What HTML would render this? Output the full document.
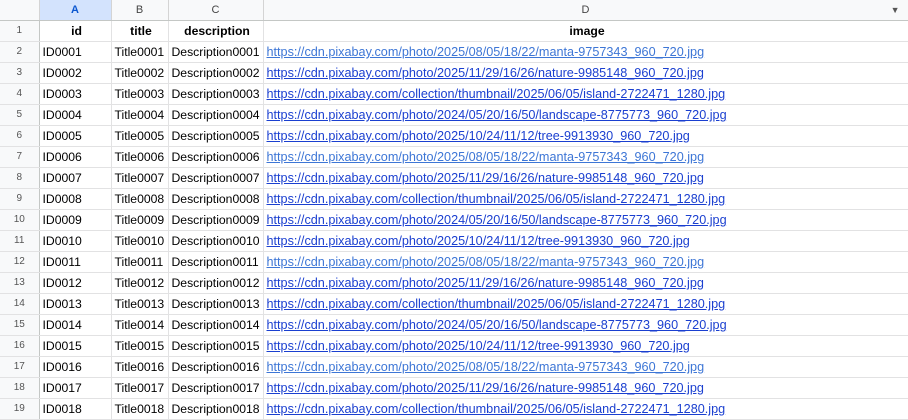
<!DOCTYPE html>
<html><head><meta charset="utf-8"><style>
body{margin:0;width:908px;height:419px;overflow:hidden;background:#fff;font-family:"Liberation Sans",Arial,sans-serif;}
table{border-collapse:collapse;table-layout:fixed;position:absolute;left:0;top:0;width:908px;}
td{height:20px;padding:0 0 0 3px;border-right:1px solid #e2e2e3;border-bottom:1px solid #e2e2e3;font-size:12.2px;white-space:nowrap;overflow:hidden;color:#000;line-height:20px;}
tr.h td{background:#f8f9fa;color:#444;font-size:11px;text-align:center;padding:0;border-bottom:1px solid #c4c7c5;border-right:1px solid #d4d4d4;}
tr.h td.sel{background:#d3e3fd;color:#0b57d0;font-weight:bold;}
td.rn{background:#f8f9fa;color:#555;font-size:10px;text-align:center;padding:0;border-right:1px solid #c4c7c5;}
tr.b td:not(.rn){font-weight:bold;text-align:center;}
a{color:#1a3fd0;text-decoration:underline;font-size:12.65px;}
a.v{color:#3d76d6;}
</style></head><body>
<table>
<colgroup><col style="width:39px"><col style="width:72px"><col style="width:57px"><col style="width:95px"><col style="width:645px"></colgroup>
<tr class="h"><td></td><td class="sel">A</td><td>B</td><td>C</td><td style="position:relative">D<span style="position:absolute;right:8px;top:0;font-size:9px;color:#555">▼</span></td></tr>
<tr class="b"><td class="rn">1</td><td>id</td><td>title</td><td>description</td><td>image</td></tr>
<tr><td class="rn">2</td><td>ID0001</td><td>Title0001</td><td>Description0001</td><td><a class="v">https://cdn.pixabay.com/photo/2025/08/05/18/22/manta-9757343_960_720.jpg</a></td></tr>
<tr><td class="rn">3</td><td>ID0002</td><td>Title0002</td><td>Description0002</td><td><a>https://cdn.pixabay.com/photo/2025/11/29/16/26/nature-9985148_960_720.jpg</a></td></tr>
<tr><td class="rn">4</td><td>ID0003</td><td>Title0003</td><td>Description0003</td><td><a>https://cdn.pixabay.com/collection/thumbnail/2025/06/05/island-2722471_1280.jpg</a></td></tr>
<tr><td class="rn">5</td><td>ID0004</td><td>Title0004</td><td>Description0004</td><td><a>https://cdn.pixabay.com/photo/2024/05/20/16/50/landscape-8775773_960_720.jpg</a></td></tr>
<tr><td class="rn">6</td><td>ID0005</td><td>Title0005</td><td>Description0005</td><td><a>https://cdn.pixabay.com/photo/2025/10/24/11/12/tree-9913930_960_720.jpg</a></td></tr>
<tr><td class="rn">7</td><td>ID0006</td><td>Title0006</td><td>Description0006</td><td><a class="v">https://cdn.pixabay.com/photo/2025/08/05/18/22/manta-9757343_960_720.jpg</a></td></tr>
<tr><td class="rn">8</td><td>ID0007</td><td>Title0007</td><td>Description0007</td><td><a>https://cdn.pixabay.com/photo/2025/11/29/16/26/nature-9985148_960_720.jpg</a></td></tr>
<tr><td class="rn">9</td><td>ID0008</td><td>Title0008</td><td>Description0008</td><td><a>https://cdn.pixabay.com/collection/thumbnail/2025/06/05/island-2722471_1280.jpg</a></td></tr>
<tr><td class="rn">10</td><td>ID0009</td><td>Title0009</td><td>Description0009</td><td><a>https://cdn.pixabay.com/photo/2024/05/20/16/50/landscape-8775773_960_720.jpg</a></td></tr>
<tr><td class="rn">11</td><td>ID0010</td><td>Title0010</td><td>Description0010</td><td><a>https://cdn.pixabay.com/photo/2025/10/24/11/12/tree-9913930_960_720.jpg</a></td></tr>
<tr><td class="rn">12</td><td>ID0011</td><td>Title0011</td><td>Description0011</td><td><a class="v">https://cdn.pixabay.com/photo/2025/08/05/18/22/manta-9757343_960_720.jpg</a></td></tr>
<tr><td class="rn">13</td><td>ID0012</td><td>Title0012</td><td>Description0012</td><td><a>https://cdn.pixabay.com/photo/2025/11/29/16/26/nature-9985148_960_720.jpg</a></td></tr>
<tr><td class="rn">14</td><td>ID0013</td><td>Title0013</td><td>Description0013</td><td><a>https://cdn.pixabay.com/collection/thumbnail/2025/06/05/island-2722471_1280.jpg</a></td></tr>
<tr><td class="rn">15</td><td>ID0014</td><td>Title0014</td><td>Description0014</td><td><a>https://cdn.pixabay.com/photo/2024/05/20/16/50/landscape-8775773_960_720.jpg</a></td></tr>
<tr><td class="rn">16</td><td>ID0015</td><td>Title0015</td><td>Description0015</td><td><a>https://cdn.pixabay.com/photo/2025/10/24/11/12/tree-9913930_960_720.jpg</a></td></tr>
<tr><td class="rn">17</td><td>ID0016</td><td>Title0016</td><td>Description0016</td><td><a class="v">https://cdn.pixabay.com/photo/2025/08/05/18/22/manta-9757343_960_720.jpg</a></td></tr>
<tr><td class="rn">18</td><td>ID0017</td><td>Title0017</td><td>Description0017</td><td><a>https://cdn.pixabay.com/photo/2025/11/29/16/26/nature-9985148_960_720.jpg</a></td></tr>
<tr><td class="rn">19</td><td>ID0018</td><td>Title0018</td><td>Description0018</td><td><a>https://cdn.pixabay.com/collection/thumbnail/2025/06/05/island-2722471_1280.jpg</a></td></tr>
</table>
</body></html>
